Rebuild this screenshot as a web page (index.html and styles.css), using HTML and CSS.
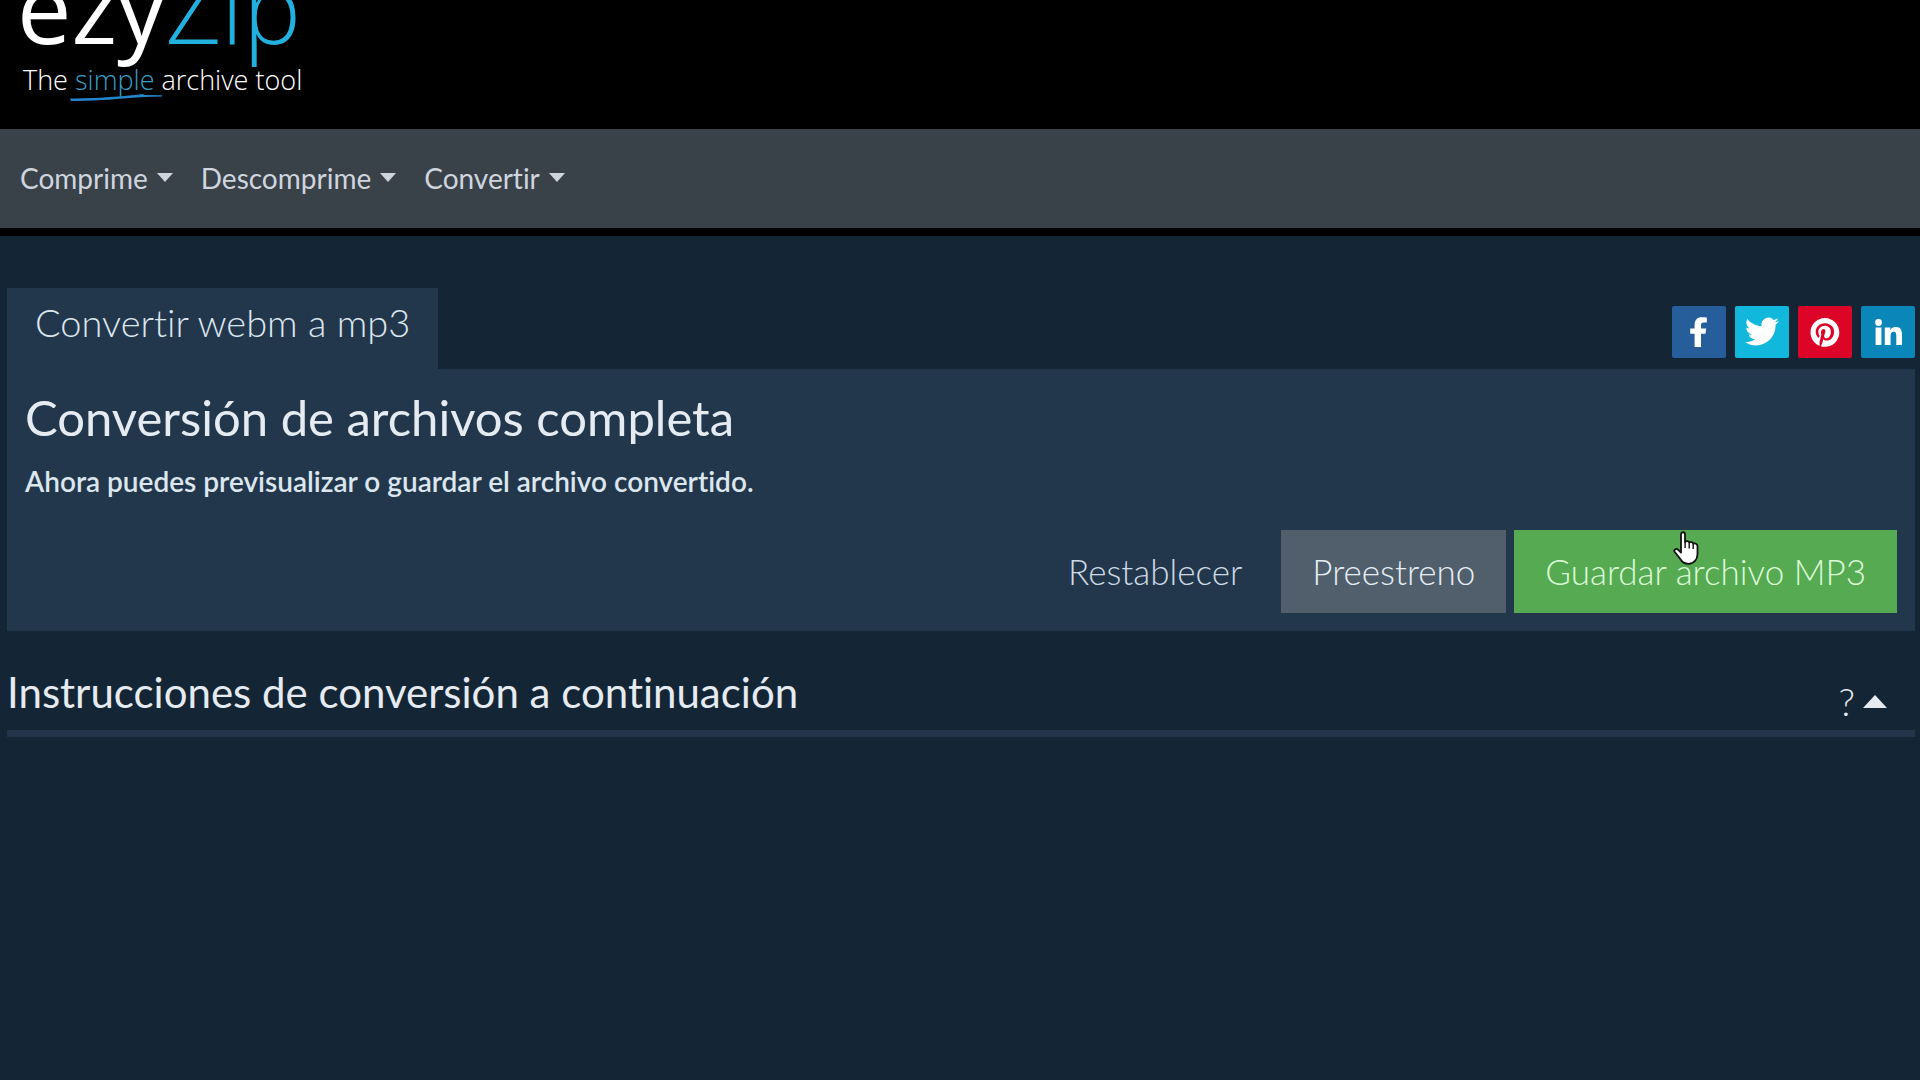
FILE: index.html
```html
<!DOCTYPE html>
<html lang="es">
<head>
	<meta charset="utf-8">
	<meta name="viewport" content="width=device-width, initial-scale=1">
	<title>Convertir webm a mp3</title>
	<link rel="stylesheet" href="styles.css">
</head>
<body>
	<header class="header">
		<a href="#" class="logo">
			<span class="logo-name">ezy<span class="logo-zip">Zip</span></span>
			<span class="logo-tagline">The <span class="logo-simple">simple<svg class="swoosh" viewBox="0 0 92 8" aria-hidden="true"><path d="M0 4.4C22 4.8 50 2.6 73 0l2 1 17 .2v1.4C62 3 32 7.6 1 7z" fill="#2484c9"/></svg></span> archive tool</span>
		</a>
	</header>
	<nav class="navbar">
		<a href="#" class="nav-link">Comprime<span class="caret-down"></span></a>
		<a href="#" class="nav-link">Descomprime<span class="caret-down"></span></a>
		<a href="#" class="nav-link">Convertir<span class="caret-down"></span></a>
	</nav>
	<main class="content">
		<div class="tabs">
			<a href="#" class="tab">Convertir webm a mp3</a>
			<div class="share">
				<a href="#" class="share-btn facebook" aria-label="Facebook">
					<svg viewBox="0 0 54 52"><path d="M22.6 41V27.8h-4.4v-5.2h4.4v-3.9c0-4.8 2.8-7.4 7-7.4 2 0 3.8.2 5.2.3v4.9h-3c-2.3 0-2.8 1.1-2.8 2.7v3.4h5.2l-.7 5.2H29V41z"/></svg>
				</a>
				<a href="#" class="share-btn twitter" aria-label="Twitter">
					<svg viewBox="0 0 54 52"><g transform="translate(10 8.5) scale(1.42)"><path d="M23.953 4.57a10 10 0 0 1-2.825.775 4.958 4.958 0 0 0 2.163-2.723c-.951.555-2.005.959-3.127 1.184a4.92 4.92 0 0 0-8.384 4.482C7.69 8.095 4.067 6.13 1.64 3.162a4.822 4.822 0 0 0-.666 2.475c0 1.71.87 3.213 2.188 4.096a4.904 4.904 0 0 1-2.228-.616v.06a4.923 4.923 0 0 0 3.946 4.827 4.996 4.996 0 0 1-2.212.085 4.936 4.936 0 0 0 4.604 3.417 9.867 9.867 0 0 1-6.102 2.105c-.39 0-.779-.023-1.17-.067a13.995 13.995 0 0 0 7.557 2.209c9.053 0 13.998-7.496 13.998-13.985 0-.21 0-.42-.015-.63A9.935 9.935 0 0 0 24 4.59z"/></g></svg>
				</a>
				<a href="#" class="share-btn pinterest" aria-label="Pinterest">
					<svg viewBox="0 0 54 52"><g transform="translate(12.5 12) scale(1.2)"><path d="M12 0C5.373 0 0 5.372 0 12c0 5.084 3.163 9.426 7.627 11.174-.105-.949-.2-2.405.042-3.441.218-.937 1.407-5.965 1.407-5.965s-.359-.719-.359-1.782c0-1.668.967-2.914 2.171-2.914 1.023 0 1.518.769 1.518 1.69 0 1.029-.655 2.568-.994 3.995-.283 1.194.599 2.169 1.777 2.169 2.133 0 3.772-2.249 3.772-5.495 0-2.873-2.064-4.882-5.012-4.882-3.414 0-5.418 2.561-5.418 5.207 0 1.031.397 2.138.893 2.738a.36.36 0 0 1 .083.345l-.333 1.36c-.053.22-.174.267-.402.161-1.499-.698-2.436-2.889-2.436-4.649 0-3.785 2.75-7.262 7.929-7.262 4.163 0 7.398 2.967 7.398 6.931 0 4.136-2.607 7.464-6.227 7.464-1.216 0-2.359-.631-2.75-1.378l-.748 2.853c-.271 1.043-1.002 2.35-1.492 3.146C9.57 23.812 10.763 24 12 24c6.627 0 12-5.373 12-12 0-6.628-5.373-12-12-12z"/></g></svg>
				</a>
				<a href="#" class="share-btn linkedin" aria-label="LinkedIn">
					<svg viewBox="0 0 54 52"><circle cx="17.5" cy="16.5" r="3.4"/><path d="M14.6 21.5h5.8V39h-5.8zM23.8 21.5h5.5v2.5c1-1.8 2.9-3 5.6-3 5 0 6.1 3.4 6.1 7.8V39h-5.7v-9c0-2.2-.2-4.3-2.7-4.3s-3 2.1-3 4.2V39h-5.8z"/></svg>
				</a>
			</div>
		</div>
		<section class="panel">
			<h2 class="panel-title">Conversión de archivos completa</h2>
			<p class="panel-text">Ahora puedes previsualizar o guardar el archivo convertido.</p>
			<div class="actions">
				<button type="button" class="btn btn-reset">Restablecer</button>
				<button type="button" class="btn btn-preview">Preestreno</button>
				<button type="button" class="btn btn-save">Guardar archivo MP3
					<svg class="pointer" viewBox="0 0 26 34" aria-hidden="true"><path d="M8 3.5C8 .5 12 .5 12 3.5V11c1-1.5 3.8-1.2 4.2.6 1.2-1 3.6-.6 4 1.2 1.6-.8 4.3-.2 4.3 2.4V23c0 5.5-3.5 9.8-9 9.800-4 0-6.400-1.600-8.200-4.800L1.6 20.800c-1-2.200 1.600-3.800 3.400-2.200L8 21.500z" fill="#fff" stroke="#111" stroke-width="1.8" stroke-linejoin="round"/><path d="M12.1 11v6M16.2 12v5.5M20.2 13v5" stroke="#111" stroke-width="1.4" fill="none"/></svg>
				</button>
			</div>
		</section>
		<div class="instructions">
			<h2 class="instructions-title">Instrucciones de conversión a continuación</h2>
			<a href="#" class="help">?<span class="caret-up"></span></a>
		</div>
	</main>
</body>
</html>
```
FILE: styles.css
```css
* {
	box-sizing: border-box;
}
body {
	margin: 0;
	background-color: #142635;
	color: #e6ebf2;
	font-family: 'Lato', sans-serif;
	font-variant-ligatures: none;
}
a {
	color: inherit;
	text-decoration: none;
}
h2, p {
	margin: 0;
}

/* Header */
.header {
	overflow: hidden;
	padding: 0 17px 31px;
	background-color: #000;
	font-family: 'Open Sans', sans-serif;
}
.logo {
	display: inline-flex;
	flex-direction: column;
	gap: 7px;
	margin-top: -42px; /* the top of the logo is cut off */
	vertical-align: top;
	color: #fff;
}
.logo-name {
	font-size: 97px;
	line-height: 97px;
}
.logo-zip {
	color: #22b1df;
	font-weight: 300;
}
.logo-tagline {
	padding-left: 6px;
	font-size: 27px;
	line-height: 36px;
	font-weight: 300;
}
.logo-simple {
	position: relative;
	color: #3a9fc6;
}
.swoosh {
	position: absolute;
	left: -5px;
	bottom: -4px;
	width: 92px;
	height: 8px;
}

/* Navigation */
.navbar {
	display: flex;
	flex-wrap: wrap;
	gap: 28px;
	padding: 32px 20px;
	background-color: #394149;
	border-bottom: 8px solid #000;
}
.nav-link {
	display: flex;
	align-items: center;
	gap: 9px;
	color: #cfd5df;
	font-size: 28px;
	line-height: 35px;
}
.caret-down {
	border: 8px solid transparent;
	border-top: 9px solid #cfd5df;
	border-bottom: 0;
	margin-bottom: 2px;
}

/* Tab and share buttons */
.content {
	padding: 52px 5px 0 7px;
}
.tabs {
	display: flex;
	justify-content: space-between;
	align-items: flex-end;
}
.tab {
	padding: 11px 28px 24px;
	background-color: #22374b;
	color: #dce6ef;
	font-size: 38px;
	line-height: 46px;
	font-weight: 300;
}
.share {
	display: flex;
	gap: 9px;
	margin-bottom: 11px;
}
.share-btn {
	width: 54px;
	height: 52px;
	border-radius: 2px;
	fill: #fff;
}
.share-btn svg {
	display: block;
}
.facebook {
	background-color: #265e9c;
}
.twitter {
	background-color: #12b8dc;
}
.pinterest {
	background-color: #dc0528;
}
.linkedin {
	background-color: #0a86b9;
}

/* Panel */
.panel {
	padding: 19px 18px 18px;
	background-color: #22374b;
}
.panel-title {
	margin-bottom: 18px;
	font-size: 49px;
	line-height: 58px;
	font-weight: 400;
}
.panel-text {
	margin-bottom: 32px;
	color: #dce6ef;
	font-size: 28px;
	line-height: 34px;
	font-weight: 600;
}
.actions {
	display: flex;
	flex-wrap: wrap;
	justify-content: flex-end;
	gap: 8px;
}
.btn {
	padding: 20px 31px;
	border: none;
	color: #e6eef6;
	font-family: inherit;
	font-size: 35px;
	line-height: 43px;
	font-weight: 300;
	cursor: pointer;
}
.btn-reset {
	background-color: transparent;
	color: #cfdae6;
}
.btn-preview {
	background-color: #515e6b;
}
.btn-save {
	position: relative;
	background-color: #56aa51;
	color: #dcfad8;
}
.pointer {
	position: absolute;
	left: 159px;
	top: 1px;
	width: 26px;
	height: 34px;
}

/* Instructions */
.instructions {
	display: flex;
	justify-content: space-between;
	align-items: flex-end;
	margin-top: 36px;
	padding-bottom: 6px;
	border-bottom: 7px solid #22354a;
}
.instructions-title {
	margin-bottom: 7px;
	font-size: 42px;
	line-height: 50px;
	font-weight: 400;
}
.help {
	display: flex;
	align-items: center;
	gap: 8px;
	padding-right: 28px;
	font-size: 38px;
	line-height: 46px;
	font-weight: 300;
}
.caret-up {
	border: 12px solid transparent;
	border-bottom: 13px solid #e6ebf2;
	border-top: 0;
}
```
